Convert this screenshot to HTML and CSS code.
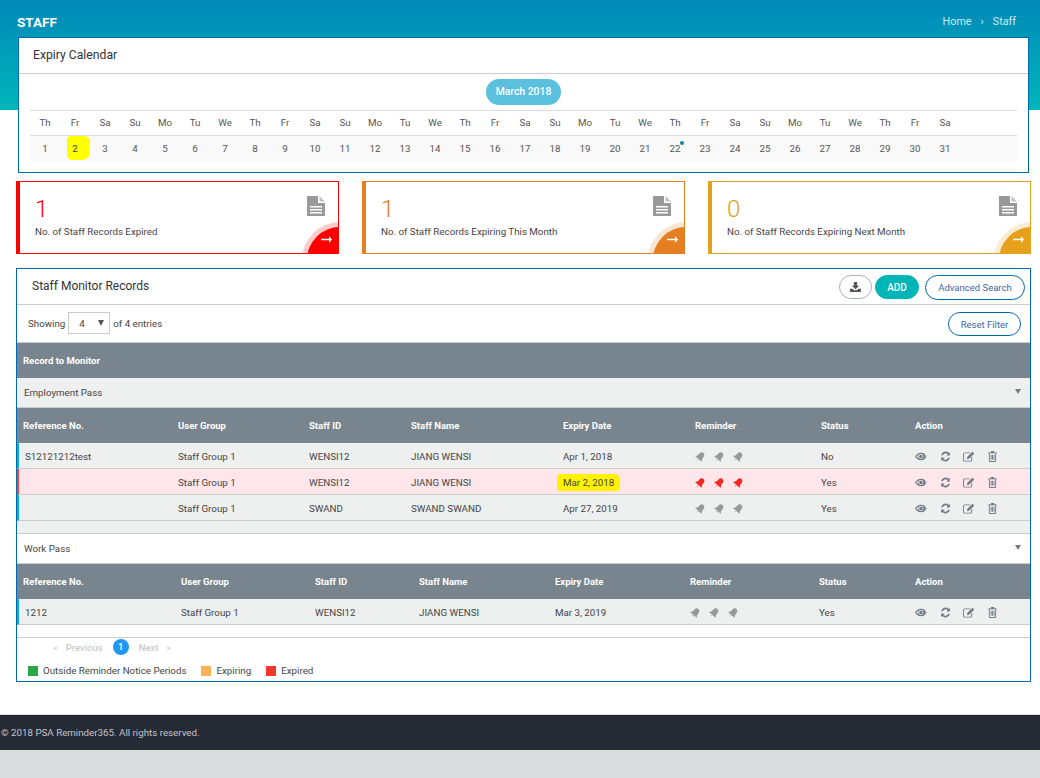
FILE: index.html
```html
<!DOCTYPE html>
<html lang="en">
  <head>
    <meta charset="UTF-8" />
    <title>Staff</title>
    <link rel="stylesheet" href="styles.css">
  </head>
  <body>
    <svg class="sprite" xmlns="http://www.w3.org/2000/svg">
      <symbol id="i-doc" viewBox="0 0 18 20">
        <path d="M0 0h11v7h7v13H0z M3 10v1.6h12V10z M3 13v1.6h12V13z M3 16v1.6h12V16z" fill-rule="evenodd"/>
        <path d="M12.5 0l5.5 5.500h-5.500z" opacity=".6"/>
      </symbol>
      <symbol id="i-bell" viewBox="0 0 12 12">
        <g transform="rotate(40 6 6)">
          <path d="M6 1c2 0 3 1.700 3 4 0 2 .6 3.300 2 4.500H1C2.400 8.300 3 7 3 5c0-2.300 1-4 3-4z"/>
          <path d="M5 10.300h2l-1 1.200z"/>
        </g>
      </symbol>
      <symbol id="i-eye" viewBox="0 0 14 10">
        <path d="M7 .5C4 .5 1.500 2.300 0 5c1.500 2.700 4 4.500 7 4.500s5.500-1.800 7-4.500C12.500 2.300 10 .5 7 .5zm0 1.600a2.900 2.900 0 1 1 0 5.800 2.900 2.900 0 0 1 0-5.800zM1.500 5c.9-1.200 2-2.100 3.200-2.700a3.800 3.800 0 0 0 0 5.400C3.500 7.100 2.400 6.200 1.500 5zm9.800-2.700c1.200.6 2.300 1.500 3.200 2.700-.9 1.200-2 2.100-3.200 2.700a3.800 3.800 0 0 0 0-5.400z" fill-rule="evenodd"/>
        <circle cx="7" cy="5" r="2"/>
      </symbol>
      <symbol id="i-sync" viewBox="0 0 12 12">
        <path d="M10.800 1v4H6.900l1.500-1.500A3.300 3.300 0 0 0 3 4.700H1.200A5 5 0 0 1 9.700 2.200zM1.200 11V7h3.900L3.600 8.500A3.300 3.300 0 0 0 9 7.300h1.800a5 5 0 0 1-8.500 2.500z"/>
      </symbol>
      <symbol id="i-edit" viewBox="0 0 13 12">
        <path d="M1.800 1.500h6.400L7.300 2.500H1.800q-.8 0-.8.800v6.400q0 .8.800.800h6.400q.8 0 .8-.8V7l1-1v3.700q0 1.800-1.800 1.800H1.800Q0 11.500 0 9.700V3.300q0-1.800 1.800-1.800z"/>
        <path d="M10.300.8l2 2-5.500 5.500-2.700.7.700-2.700z"/>
      </symbol>
      <symbol id="i-trash" viewBox="0 0 10 12">
        <path d="M3.500 0h3l.8 1.500H10v1H9v8.200q0 1.300-1.200 1.300H2.200Q1 12 1 10.700V2.500H0v-1h2.700zM2 2.500v8q0 .5.500.500h5q.5 0 .5-.5v-8zM3 4h1v5.500H3zM4.600 4h1v5.500h-1zM6.200 4h1v5.500h-1z" fill-rule="evenodd"/>
      </symbol>
      <symbol id="i-download" viewBox="0 0 12 11">
        <path d="M4.200 0h3.600v4H10L6 8 2 4h2.200zM0 7.500h2.800L4.500 9.200h3l1.700-1.700H12V11H0z"/>
      </symbol>
      <symbol id="i-arrow" viewBox="0 0 11 7">
        <path d="M0 2.700h8V0l3 3.500L8 7V4.300H0z"/>
      </symbol>
    </svg>

    <div class="page">
      <header class="banner">
        <strong class="banner-title">STAFF</strong>
        <nav class="crumbs"><span>Home</span><span class="crumb-sep">›</span><span>Staff</span></nav>
      </header>

      <main class="content">
        <section class="card calendar">
          <h2 class="card-title">Expiry Calendar</h2>
          <div class="cal-body">
            <div class="month"><span class="month-pill">March 2018</span></div>
            <div class="cal-grid cal-head">
              <span>Th</span><span>Fr</span><span>Sa</span><span>Su</span><span>Mo</span><span>Tu</span><span>We</span>
              <span>Th</span><span>Fr</span><span>Sa</span><span>Su</span><span>Mo</span><span>Tu</span><span>We</span>
              <span>Th</span><span>Fr</span><span>Sa</span><span>Su</span><span>Mo</span><span>Tu</span><span>We</span>
              <span>Th</span><span>Fr</span><span>Sa</span><span>Su</span><span>Mo</span><span>Tu</span><span>We</span>
              <span>Th</span><span>Fr</span><span>Sa</span>
            </div>
            <div class="cal-grid cal-days">
              <span>1</span><span class="day-marked">2</span><span>3</span><span>4</span><span>5</span><span>6</span><span>7</span>
              <span>8</span><span>9</span><span>10</span><span>11</span><span>12</span><span>13</span><span>14</span>
              <span>15</span><span>16</span><span>17</span><span>18</span><span>19</span><span>20</span><span>21</span>
              <span class="day-event">22</span><span>23</span><span>24</span><span>25</span><span>26</span><span>27</span><span>28</span>
              <span>29</span><span>30</span><span>31</span>
            </div>
          </div>
        </section>

        <section class="stats">
          <article class="stat stat-red">
            <div class="stat-num">1</div>
            <div class="stat-label">No. of Staff Records Expired</div>
            <svg class="stat-doc"><use href="#i-doc"/></svg>
            <span class="stat-corner"><svg class="stat-arrow"><use href="#i-arrow"/></svg></span>
          </article>
          <article class="stat stat-orange">
            <div class="stat-num">1</div>
            <div class="stat-label">No. of Staff Records Expiring This Month</div>
            <svg class="stat-doc"><use href="#i-doc"/></svg>
            <span class="stat-corner"><svg class="stat-arrow"><use href="#i-arrow"/></svg></span>
          </article>
          <article class="stat stat-amber">
            <div class="stat-num">0</div>
            <div class="stat-label">No. of Staff Records Expiring Next Month</div>
            <svg class="stat-doc"><use href="#i-doc"/></svg>
            <span class="stat-corner"><svg class="stat-arrow"><use href="#i-arrow"/></svg></span>
          </article>
        </section>

        <section class="card records">
          <div class="records-head">
            <h2 class="records-title">Staff Monitor Records</h2>
            <div class="records-tools">
              <button class="btn btn-icon"><svg class="icon-download"><use href="#i-download"/></svg></button>
              <button class="btn btn-add">ADD</button>
              <button class="btn btn-line btn-search">Advanced Search</button>
            </div>
          </div>

          <div class="filter-row">
            <div class="entries">
              <span>Showing</span>
              <span class="entries-select">4<i class="caret"></i></span>
              <span>of 4 entries</span>
            </div>
            <button class="btn btn-line btn-reset">Reset Filter</button>
          </div>

          <div class="band">Record to Monitor</div>

          <div class="group-row group-grey">Employment Pass<i class="group-caret"></i></div>
          <table class="grid grid-a">
            <colgroup><col class="a1"><col class="a2"><col class="a3"><col class="a4"><col class="a5"><col class="a6"><col class="a7"><col></colgroup>
            <thead>
              <tr><th>Reference No.</th><th>User Group</th><th>Staff ID</th><th>Staff Name</th><th>Expiry Date</th><th>Reminder</th><th>Status</th><th>Action</th></tr>
            </thead>
            <tbody>
              <tr>
                <td>S12121212test</td><td>Staff Group 1</td><td>WENSI12</td><td>JIANG WENSI</td><td>Apr 1, 2018</td>
                <td><div class="bells"><svg><use href="#i-bell"/></svg><svg><use href="#i-bell"/></svg><svg><use href="#i-bell"/></svg></div></td>
                <td>No</td>
                <td><div class="actions"><svg class="a-eye"><use href="#i-eye"/></svg><svg class="a-sync"><use href="#i-sync"/></svg><svg class="a-edit"><use href="#i-edit"/></svg><svg class="a-trash"><use href="#i-trash"/></svg></div></td>
              </tr>
              <tr class="row-expired">
                <td></td><td>Staff Group 1</td><td>WENSI12</td><td>JIANG WENSI</td><td><span class="date-marked">Mar 2, 2018</span></td>
                <td><div class="bells"><svg><use href="#i-bell"/></svg><svg><use href="#i-bell"/></svg><svg><use href="#i-bell"/></svg></div></td>
                <td>Yes</td>
                <td><div class="actions"><svg class="a-eye"><use href="#i-eye"/></svg><svg class="a-sync"><use href="#i-sync"/></svg><svg class="a-edit"><use href="#i-edit"/></svg><svg class="a-trash"><use href="#i-trash"/></svg></div></td>
              </tr>
              <tr>
                <td></td><td>Staff Group 1</td><td>SWAND</td><td>SWAND SWAND</td><td>Apr 27, 2019</td>
                <td><div class="bells"><svg><use href="#i-bell"/></svg><svg><use href="#i-bell"/></svg><svg><use href="#i-bell"/></svg></div></td>
                <td>Yes</td>
                <td><div class="actions"><svg class="a-eye"><use href="#i-eye"/></svg><svg class="a-sync"><use href="#i-sync"/></svg><svg class="a-edit"><use href="#i-edit"/></svg><svg class="a-trash"><use href="#i-trash"/></svg></div></td>
              </tr>
            </tbody>
          </table>
          <div class="grid-spacer"></div>

          <div class="group-row">Work Pass<i class="group-caret"></i></div>
          <table class="grid grid-b">
            <colgroup><col class="b1"><col class="b2"><col class="b3"><col class="b4"><col class="b5"><col class="b6"><col class="b7"><col></colgroup>
            <thead>
              <tr><th>Reference No.</th><th>User Group</th><th>Staff ID</th><th>Staff Name</th><th>Expiry Date</th><th>Reminder</th><th>Status</th><th>Action</th></tr>
            </thead>
            <tbody>
              <tr>
                <td>1212</td><td>Staff Group 1</td><td>WENSI12</td><td>JIANG WENSI</td><td>Mar 3, 2019</td>
                <td><div class="bells"><svg><use href="#i-bell"/></svg><svg><use href="#i-bell"/></svg><svg><use href="#i-bell"/></svg></div></td>
                <td>Yes</td>
                <td><div class="actions"><svg class="a-eye"><use href="#i-eye"/></svg><svg class="a-sync"><use href="#i-sync"/></svg><svg class="a-edit"><use href="#i-edit"/></svg><svg class="a-trash"><use href="#i-trash"/></svg></div></td>
              </tr>
            </tbody>
          </table>

          <div class="records-foot">
            <div class="pager">
              <span class="pager-arrow">«</span><span>Previous</span>
              <span class="pager-current">1</span>
              <span>Next</span><span class="pager-arrow">»</span>
            </div>
            <div class="legend">
              <span class="legend-item"><i class="swatch swatch-green"></i>Outside Reminder Notice Periods</span>
              <span class="legend-item"><i class="swatch swatch-orange"></i>Expiring</span>
              <span class="legend-item"><i class="swatch swatch-red"></i>Expired</span>
            </div>
          </div>
        </section>
      </main>

      <footer class="footer">© 2018 PSA Reminder365. All rights reserved.</footer>
    </div>
  </body>
</html>
```

FILE: styles.css
```css
* {
  box-sizing: border-box;
}

html,
body {
  height: 100%;
}

body {
  margin: 0;
  background-color: #d9dcdc;
  color: #444;
  font-family: Roboto, "Liberation Sans", sans-serif;
  font-size: 9.75px;
  overflow: hidden;
}

.sprite {
  display: none;
}

.page {
  background-color: #fff;
}

/* banner */
.banner {
  display: flex;
  justify-content: space-between;
  align-items: flex-start;
  height: 110px;
  padding: 14px 24px 0 17px;
  background: linear-gradient(to bottom, #0089b8, #00b6b9);
  color: #fff;
}

.banner-title {
  font-size: 13.5px;
  line-height: 16px;
  font-weight: 700;
}

.crumbs {
  display: flex;
  gap: 9px;
  font-size: 10.75px;
  line-height: 16px;
  color: #c8eef2;
}

.content {
  margin-top: -73px;
  padding: 0 9px 32px 16px;
}

.card {
  background-color: #fff;
  border: 1px solid #0068b0;
}

/* calendar */
.calendar {
  height: 136px;
  margin: 0 2px;
}

.card-title {
  height: 36px;
  margin: 0;
  padding-left: 14px;
  border-bottom: 1px solid #ccc;
  color: #333;
  font-size: 12.2px;
  font-weight: 400;
  line-height: 34px;
}

.cal-body {
  padding: 5px 11px 0;
}

.month {
  display: flex;
  justify-content: center;
  height: 31px;
}

.month-pill {
  width: 75px;
  height: 26px;
  border-radius: 13px;
  background-color: #5bc0de;
  color: #fff;
  font-size: 10.4px;
  font-weight: 500;
  line-height: 25px;
  text-align: center;
}

.cal-grid {
  display: grid;
  grid-template-columns: repeat(31, 30px);
  text-align: center;
}

.cal-head {
  height: 26px;
  border-top: 1px solid #ddd;
  border-bottom: 1px solid #ddd;
  color: #555;
  line-height: 24px;
}

.cal-days {
  height: 26px;
  background-color: #f9f9f9;
  color: #555;
  line-height: 25px;
}

.day-marked {
  width: 23px;
  height: 24px;
  margin-left: 7px;
  border-radius: 4px 6px 8px 5px;
  background-color: #ff0;
  color: #444;
  text-indent: -7px;
}

.day-event {
  position: relative;
}

.day-event::after {
  content: "";
  position: absolute;
  top: 5px;
  right: 6px;
  width: 4px;
  height: 4px;
  border-radius: 50%;
  background-color: #0087a8;
}

/* stat cards */
.stats {
  display: flex;
  gap: 23px;
  margin-top: 8px;
}

.stat {
  position: relative;
  width: 323px;
  height: 73px;
  padding: 14px 0 0 15px;
  overflow: hidden;
  background-color: #fff;
  border: 1px solid;
  border-left-width: 4px;
}

.stat-num {
  font-size: 24px;
  font-weight: 300;
  line-height: 26px;
}

.stat-label {
  margin-top: 3px;
  color: #444;
  line-height: 14px;
}

.stat-doc {
  position: absolute;
  top: 14px;
  right: 13px;
  width: 18px;
  height: 20px;
  fill: #999;
}

.stat-corner {
  position: absolute;
  right: -35px;
  bottom: -40px;
  width: 66px;
  height: 66px;
  border-radius: 50%;
}

.stat-arrow {
  position: absolute;
  top: 9px;
  left: 14px;
  width: 11px;
  height: 7px;
  fill: #fff;
}

.stat-red {
  border-color: #f00;
}

.stat-red .stat-num {
  color: #f00;
}

.stat-red .stat-corner {
  background-color: #f00;
  box-shadow: 0 0 0 5px #ffcccc;
}

.stat-orange {
  border-color: #e67e22;
}

.stat-orange .stat-num {
  color: #e67e22;
}

.stat-orange .stat-corner {
  background-color: #e67e22;
  box-shadow: 0 0 0 5px #fae5d3;
}

.stat-amber {
  border-color: #e5a11c;
}

.stat-amber .stat-num {
  color: #e5a11c;
}

.stat-amber .stat-corner {
  background-color: #e5a11c;
  box-shadow: 0 0 0 5px #f9ecd2;
}

/* records */
.records {
  margin-top: 14px;
  height: 414px;
}

.records-head {
  display: flex;
  justify-content: space-between;
  align-items: flex-start;
  height: 36px;
  padding: 6px 5px 0 15px;
  border-bottom: 1px solid #ccc;
}

.records-title {
  margin: 0;
  color: #333;
  font-size: 12px;
  font-weight: 400;
  line-height: 22px;
}

.records-tools {
  display: flex;
  gap: 3px;
}

.btn {
  padding: 0;
  background: #fff;
  border: 1px solid #0068b0;
  border-radius: 13px;
  font-family: inherit;
  font-size: 9.5px;
  color: #3c66a8;
}

.btn-icon {
  display: flex;
  align-items: center;
  justify-content: center;
  width: 33px;
  height: 24px;
  border-color: #aab2b8;
}

.icon-download {
  width: 11px;
  height: 10px;
  fill: #555;
}

.btn-add {
  width: 44px;
  height: 24px;
  background-color: #00b5b8;
  border-color: #00b5b8;
  color: #fff;
  font-size: 10px;
  font-weight: 500;
}

.btn-search {
  width: 100px;
  height: 25px;
  margin-left: 3px;
}

.btn-reset {
  width: 73px;
  height: 24px;
}

.filter-row {
  display: flex;
  justify-content: space-between;
  align-items: flex-start;
  height: 38px;
  padding: 7px 9px 0 11px;
  border-bottom: 1px solid #ccc;
}

.entries {
  display: flex;
  align-items: center;
  gap: 3px;
  height: 22px;
}

.entries-select {
  position: relative;
  width: 42px;
  height: 22px;
  padding-left: 10px;
  border: 1px solid #ccc;
  line-height: 22px;
}

.caret {
  position: absolute;
  top: 7px;
  right: 5px;
  border-top: 6px solid #555;
  border-left: 3px solid transparent;
  border-right: 3px solid transparent;
}

.band {
  height: 35px;
  padding-left: 6px;
  background-color: #78858f;
  color: #fff;
  font-size: 9.5px;
  font-weight: 700;
  line-height: 35px;
}

.group-row {
  position: relative;
  height: 30px;
  padding-left: 7px;
  border-bottom: 1px solid #ccc;
  line-height: 29px;
}

.group-grey {
  background-color: #eeefef;
}

.group-caret {
  position: absolute;
  top: 11px;
  right: 9px;
  border-top: 5px solid #777;
  border-left: 3.5px solid transparent;
  border-right: 3.5px solid transparent;
}

.grid {
  width: 100%;
  border-collapse: separate;
  border-spacing: 0;
  table-layout: fixed;
}

.a1 { width: 155px; }
.a2 { width: 131px; }
.a3 { width: 102px; }
.a4 { width: 152px; }
.a5 { width: 132px; }
.a6 { width: 126px; }
.a7 { width: 94px; }

.b1 { width: 158px; }
.b2 { width: 134px; }
.b3 { width: 104px; }
.b4 { width: 136px; }
.b5 { width: 135px; }
.b6 { width: 129px; }
.b7 { width: 96px; }

.grid th {
  height: 35px;
  padding: 0 0 0 6px;
  background-color: #78858f;
  color: #fff;
  font-size: 9.5px;
  font-weight: 700;
  text-align: left;
}

.grid td {
  height: 26px;
  padding: 1px 0 0 6px;
  background-color: #eeefef;
  border-bottom: 1px solid #ccc;
}

.grid td:first-child {
  border-left: 2px solid #00b5b8;
}

.row-expired td {
  background-color: #ffe6eb;
}

.row-expired td:first-child {
  border-left-color: #f44336;
}

.date-marked {
  margin: 0 -6px;
  padding: 3px 6px;
  border-radius: 3px 5px 3px 2px;
  background-color: #fff200;
}

.bells {
  display: flex;
  gap: 8px;
  fill: #999;
}

.bells svg {
  width: 11px;
  height: 11px;
}

.row-expired .bells {
  fill: #f4281c;
}

.actions {
  display: flex;
  align-items: center;
  gap: 12.5px;
  fill: #6f7b85;
}

.a-eye { width: 12px; height: 9px; }
.a-sync { width: 11px; height: 11px; }
.a-edit { width: 12px; height: 11px; }
.a-trash { width: 9px; height: 11px; }

.grid-spacer {
  height: 13px;
  background-color: #eeefef;
  border-bottom: 1px solid #ccc;
}

.records-foot {
  margin-top: 12px;
  padding-left: 11px;
  border-top: 1px solid #ccc;
}

.pager {
  display: flex;
  align-items: center;
  gap: 8px;
  height: 18px;
  padding-left: 25px;
  color: #ccc;
  font-size: 9.5px;
  font-weight: 500;
}

.pager-current {
  width: 16px;
  height: 16px;
  margin: 0 2px;
  border-radius: 50%;
  background-color: #2196f3;
  color: #fff;
  line-height: 16px;
  text-align: center;
}

.legend {
  display: flex;
  gap: 15px;
  margin-top: 9px;
}

.legend-item {
  display: flex;
  align-items: center;
  gap: 5px;
  line-height: 12px;
}

.swatch {
  width: 10px;
  height: 10px;
}

.swatch-green { background-color: #28a745; }
.swatch-orange { background-color: #ffb255; }
.swatch-red { background-color: #f2382c; }

/* footer */
.footer {
  height: 36px;
  padding-left: 1px;
  background-color: #252a35;
  border-top: 1px solid #ddd;
  color: #c4c7cc;
  line-height: 35px;
}
```
